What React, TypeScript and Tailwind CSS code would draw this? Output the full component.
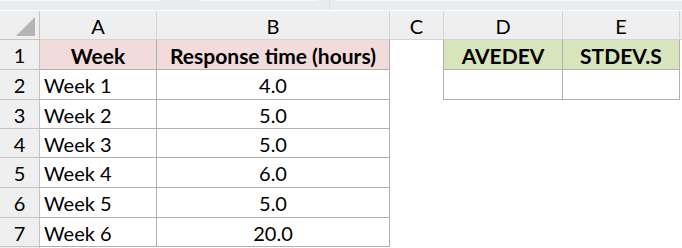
const font = { fontFamily: 'Lato, "Open Sans", sans-serif' }

const cols = [
  { label: 'A', w: 'w-[117px]' },
  { label: 'B', w: 'w-[233px]' },
  { label: 'C', w: 'w-[54px]' },
  { label: 'D', w: 'w-[119px]' },
  { label: 'E', w: 'w-[117px]' },
]

const rowHeights = ['h-[30px]', 'h-[30px]', 'h-[29px]', 'h-[29px]', 'h-[30px]', 'h-[30px]', 'h-[29px]']

const data = [
  ['Week 1', '4.0'],
  ['Week 2', '5.0'],
  ['Week 3', '5.0'],
  ['Week 4', '6.0'],
  ['Week 5', '5.0'],
  ['Week 6', '20.0'],
]

function Corner() {
  return (
    <div className="relative h-full w-[40px] shrink-0 border-r border-b border-[#c4c4c4] bg-[#efefef]">
      <div
        className="absolute left-[16px] top-[6px] h-[19px] w-[19px] bg-[#b4b4b4]"
        style={{ clipPath: 'polygon(100% 0, 100% 100%, 0 100%)' }}
      />
    </div>
  )
}

export default function App() {
  return (
    <div className="h-[248px] w-[682px] overflow-hidden bg-white text-black" style={font}>
      {/* formula bar remnant */}
      <div className="relative h-[10px] bg-[#e8ecef]">
        <div className="absolute left-0 top-0 h-[1px] w-[160px] bg-[#f6f7f8]" />
        <div className="absolute left-[200px] top-0 h-[1px] w-[118px] bg-[#f6f7f8]" />
        <div className="absolute left-[329px] top-0 h-[10px] w-[1px] bg-[#d9dde1]" />
        <div className="absolute left-[335px] top-0 h-[1px] w-[347px] bg-[#f6f7f8]" />
      </div>
      <div className="h-[1px] bg-white" />

      {/* column headers */}
      <div className="flex h-[29px]">
        <Corner />
        {cols.map(c => (
          <div
            key={c.label}
            className={`${c.w} flex shrink-0 items-center justify-center border-r border-b border-[#d4d4d4] bg-[#efefef] pt-[1px] text-[20px] leading-none`}
          >
            {c.label}
          </div>
        ))}
        <div className="flex-1 border-b border-[#d4d4d4] bg-[#efefef]" />
      </div>

      {/* row 1 */}
      <div className={`flex ${rowHeights[0]}`}>
        <div className="flex w-[40px] shrink-0 items-center justify-center border-r border-b border-[#c4c4c4] bg-[#efefef] pt-[1px] text-[20px] leading-none">
          1
        </div>
        <div className="flex w-[117px] shrink-0 items-center justify-center border-r border-b border-[#b0b0b0] bg-[#f2dcdb] pt-[1px] text-[21px] font-bold leading-none">
          Week
        </div>
        <div className="flex w-[233px] shrink-0 items-center justify-center border-r border-b border-[#b0b0b0] bg-[#f2dcdb] pt-[1px] text-[21px] font-bold leading-none">
          Response time (hours)
        </div>
        <div className="w-[54px] shrink-0 border-r border-[#b0b0b0]" />
        <div className="flex w-[119px] shrink-0 items-center justify-center border-r border-b border-[#b0b0b0] bg-[#d8e4bc] pt-[1px] text-[21px] font-bold leading-none">
          AVEDEV
        </div>
        <div className="flex w-[117px] shrink-0 items-center justify-center border-r border-b border-[#b0b0b0] bg-[#d8e4bc] pt-[1px] text-[21px] font-bold leading-none">
          STDEV.S
        </div>
      </div>

      {data.map(([week, hours], i) => (
        <div key={week} className={`flex ${rowHeights[i + 1]}`}>
          <div className="flex w-[40px] shrink-0 items-center justify-center border-r border-b border-[#c4c4c4] bg-[#efefef] pt-[1px] text-[20px] leading-none">
            {i + 2}
          </div>
          <div className="flex w-[117px] shrink-0 items-center border-r border-b border-[#b0b0b0] pl-[4px] pt-[1px] text-[20px] leading-none">
            {week}
          </div>
          <div className="flex w-[233px] shrink-0 items-center justify-center border-r border-b border-[#b0b0b0] pt-[1px] text-[20px] leading-none">
            {hours}
          </div>
          {i === 0 ? (
            <>
              <div className="w-[54px] shrink-0 border-r border-[#b0b0b0]" />
              <div className="w-[119px] shrink-0 border-r border-b border-[#b0b0b0]" />
              <div className="w-[117px] shrink-0 border-r border-b border-[#b0b0b0]" />
            </>
          ) : null}
        </div>
      ))}

      <div className="flex h-[2px]">
        <div className="w-[40px] shrink-0 border-r border-[#c4c4c4] bg-[#efefef]" />
      </div>
    </div>
  )
}
